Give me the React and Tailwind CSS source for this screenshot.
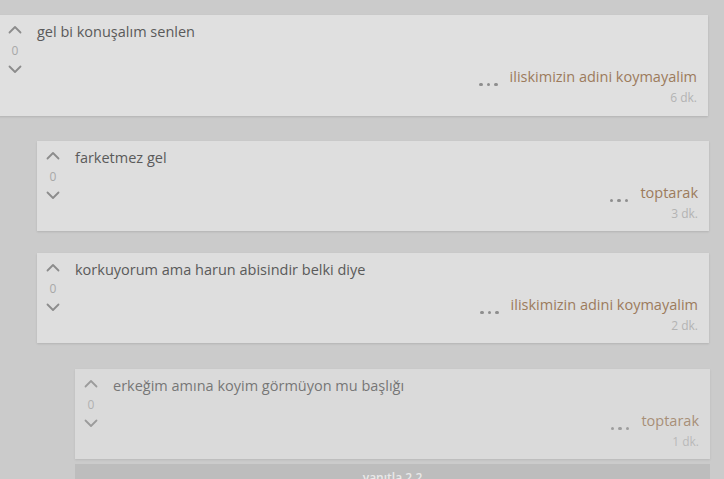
import React from 'react';

const comments = [
  { id: 1, text: 'gel bi konuşalım senlen', author: 'iliskimizin adini koymayalim', time: '6 dk.', indent: '-ml-px w-[709px]', bg: 'bg-[#e0e0e0]', gapTop: 'mt-[15px]', footer: 'mt-[25px]', pb: 'pb-[10px]' },
  { id: 2, text: 'farketmez gel', author: 'toptarak', time: '3 dk.', indent: 'ml-[37px] w-[672px]', bg: 'bg-[#dedede]', gapTop: 'mt-[25px]', footer: 'mt-[15px]', pb: 'pb-[9px]' },
  { id: 3, text: 'korkuyorum ama harun abisindir belki diye', author: 'iliskimizin adini koymayalim', time: '2 dk.', indent: 'ml-[37px] w-[672px]', bg: 'bg-[#dedede]', gapTop: 'mt-[22px]', footer: 'mt-[15px]', pb: 'pb-[9px]' },
  { id: 4, text: 'erkeğim amına koyim görmüyon mu başlığı', author: 'toptarak', time: '1 dk.', indent: 'ml-[75px] w-[635px] opacity-75', bg: 'bg-[#e0e0e0]', gapTop: 'mt-[26px]', footer: 'mt-[15px]', pb: 'pb-[9px]' },
];

const Chevron = ({ up }) => (
  <svg width="14" height="9" viewBox="0 0 14 9" fill="none" stroke="#8c8c8c" strokeWidth="1.8" strokeLinecap="round" strokeLinejoin="round">
    {up ? <path d="M1.5 7.5 7 2l5.5 5.5" /> : <path d="M1.5 1.5 7 7l5.5-5.5" />}
  </svg>
);

const Comment = ({ c }) => (
  <div className={`${c.indent} ${c.gapTop} ${c.bg} flex shadow-[0_1px_2px_rgba(0,0,0,0.12)]`}>
    <div className="w-[32px] flex flex-col items-center pt-[10px] shrink-0">
      <Chevron up />
      <span className="text-[12px] leading-[16px] text-[#a8a8a8] mt-[9px]">0</span>
      <span className="mt-[6px] flex"><Chevron /></span>
    </div>
    <div className={`flex-1 ml-[6px] pt-[7px] ${c.pb} pr-[11px]`}>
      <p className="text-[14.5px] leading-[20px] text-[#5a5a5a]">{c.text}</p>
      <div className={`${c.footer} flex justify-end items-end gap-[12px]`}>
        <div className="flex gap-[4px] mb-[1px]">
          <span className="w-[3.5px] h-[3.5px] rounded-full bg-[#8e8e8e]" />
          <span className="w-[3.5px] h-[3.5px] rounded-full bg-[#8e8e8e]" />
          <span className="w-[3.5px] h-[3.5px] rounded-full bg-[#8e8e8e]" />
        </div>
        <span className="text-[14.5px] leading-[20px] text-[#9c7b5c]">{c.author}</span>
      </div>
      <p className="text-right text-[12px] leading-[16px] text-[#b3b3b3] mt-[3px]">{c.time}</p>
    </div>
  </div>
);

export default function App() {
  return (
    <div className="w-[724px] h-[479px] overflow-hidden bg-[#cbcbcb] font-['Open_Sans',sans-serif]">
      {comments.map((c) => (
        <Comment key={c.id} c={c} />
      ))}
      <div className="ml-[75px] w-[635px] mt-[5px] h-[30px] bg-[#bdbdbd] flex justify-center pt-[5px]">
        <span className="text-[12px] font-semibold text-[#e9e9e9]">yanıtla 2.2</span>
      </div>
    </div>
  );
}
